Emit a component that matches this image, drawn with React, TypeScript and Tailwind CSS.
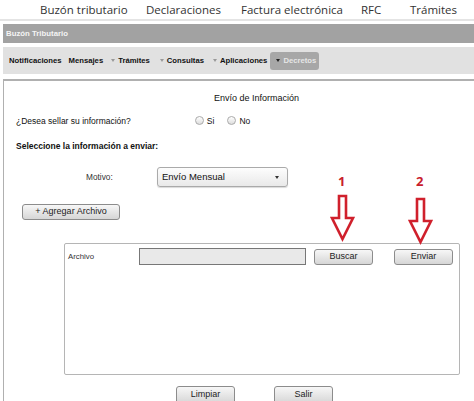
import React from "react";

const Arrow = ({ className }: { className: string }) => (
  <svg className={className} width="26" height="48" viewBox="0 0 26 48" fill="none">
    <path
      d="M9 2 H16 V24 H23 L12.5 45 L2 24 H9 Z"
      stroke="#d0202c"
      strokeWidth="2.6"
      strokeLinejoin="miter"
      fill="white"
    />
  </svg>
);

const Btn = ({ children, className }: { children: React.ReactNode; className: string }) => (
  <div
    className={
      "flex items-center justify-center rounded-[3px] border border-[#8c8c8c] bg-gradient-to-b from-[#f7f7f7] to-[#d6d6d6] text-[9px] text-[#222] " +
      className
    }
  >
    {children}
  </div>
);

const Tri = ({ color }: { color: string }) => (
  <span className={"mr-[3px] inline-block h-0 w-0 border-x-[2.5px] border-t-[3px] border-x-transparent " + color} />
);

export default function App() {
  return (
    <div className="relative h-[401px] w-[474px] overflow-hidden bg-white font-['Liberation_Sans',Arial,sans-serif]">
      {/* top nav */}
      <div className="flex h-[21px] items-center border-b-2 border-[#e4e4e4] pl-[40px] font-['Open_Sans',sans-serif] text-[11.5px] text-[#333]">
        <span className="w-[106px] whitespace-nowrap">Buzón tributario</span>
        <span className="w-[95px] whitespace-nowrap">Declaraciones</span>
        <span className="w-[120px] whitespace-nowrap">Factura electrónica</span>
        <span className="w-[49px] whitespace-nowrap">RFC</span>
        <span className="whitespace-nowrap">Trámites</span>
      </div>

      {/* title bar */}
      <div className="ml-[3px] mt-[3px] flex h-[19px] items-center bg-[#a2a2a2] pl-[3px] text-[7.8px] font-bold text-[#f4f4f4]">
        Buzón Tributario
      </div>

      {/* menu bar */}
      <div className="ml-[3px] mt-[4px] flex h-[27px] items-center bg-[#e1e1e1] pl-[6px] text-[7.7px] font-bold text-[#111]">
        <span className="mr-[7px]">Notificaciones</span>
        <span className="mr-[8px]">Mensajes</span>
        <span className="mr-[10px] flex items-center">
          <Tri color="border-t-[#999]" />
          Trámites
        </span>
        <span className="mr-[9px] flex items-center">
          <Tri color="border-t-[#999]" />
          Consultas
        </span>
        <span className="mr-[3px] flex items-center">
          <Tri color="border-t-[#999]" />
          Aplicaciones
        </span>
        <span className="flex h-[18px] w-[49px] items-center rounded-[3px] bg-[#a7a7a7] pl-[6px] text-[#e6e6e6]">
          <Tri color="border-t-[#222]" />
          Decretos
        </span>
      </div>

      {/* panel */}
      <div className="ml-[3px] mt-[5px] h-[400px] border-l border-t-2 border-[#b0b0b0] text-[8.5px] text-[#111]">
        <div className="mt-[11px] pl-[210px] text-[9px]">Envío de Información</div>
        <div className="mt-[9px] flex items-center">
          <span className="pl-[12px]">¿Desea sellar su información?</span>
          <span className="ml-[64px] inline-block h-[9px] w-[9px] rounded-full border border-[#aaa] bg-gradient-to-b from-[#fff] to-[#ddd]" />
          <span className="ml-[3px]">Si</span>
          <span className="ml-[13px] inline-block h-[9px] w-[9px] rounded-full border border-[#aaa] bg-gradient-to-b from-[#fff] to-[#ddd]" />
          <span className="ml-[3px]">No</span>
        </div>
        <div className="mt-[13px] pl-[12px] font-bold">Seleccione la información a enviar:</div>
        <div className="mt-[14px] flex items-center">
          <span className="w-[153px] pl-[82px] text-[8.3px] text-[#333]">Motivo:</span>
          <div className="flex h-[20px] w-[131px] items-center justify-between rounded-[3px] border border-[#aaa] bg-gradient-to-b from-[#fdfdfd] to-[#e9e9e9] pl-[4px] pr-[8px] text-[9.5px] shadow-[0_1px_1px_rgba(0,0,0,0.15)]">
            <span>Envío Mensual</span>
            <span className="inline-block h-0 w-0 border-x-[2.5px] border-t-[3px] border-x-transparent border-t-[#333]" />
          </div>
        </div>
        <div className="mt-[17px] pl-[18px]">
          <Btn className="h-[16px] w-[98px]">+ Agregar Archivo</Btn>
        </div>
        <div className="ml-[60px] mt-[23px] h-[132px] w-[396px] rounded-[2px] border border-[#b5b5b5]">
          <div className="mt-[4px] flex items-center">
            <span className="w-[74px] pl-[3px] text-[7.8px] text-[#333]">Archivo</span>
            <div className="h-[17px] w-[167px] border border-[#777] bg-[#e9e9e9]" />
            <Btn className="ml-[8px] h-[16px] w-[59px]">Buscar</Btn>
            <Btn className="ml-[21px] h-[16px] w-[59px]">Enviar</Btn>
          </div>
        </div>
        <div className="mt-[11px] flex">
          <Btn className="ml-[172px] h-[18px] w-[59px] rounded-b-none">Limpiar</Btn>
          <Btn className="ml-[39px] h-[18px] w-[59px] rounded-b-none">Salir</Btn>
        </div>
      </div>

      {/* annotations */}
      <span className="absolute left-[338px] top-[175px] font-['Open_Sans',sans-serif] text-[13px] font-bold leading-none text-[#c8202c]">1</span>
      <span className="absolute left-[416px] top-[175px] font-['Open_Sans',sans-serif] text-[13px] font-bold leading-none text-[#c8202c]">2</span>
      <Arrow className="absolute left-[330px] top-[194px]" />
      <Arrow className="absolute left-[408px] top-[197px]" />
    </div>
  );
}
